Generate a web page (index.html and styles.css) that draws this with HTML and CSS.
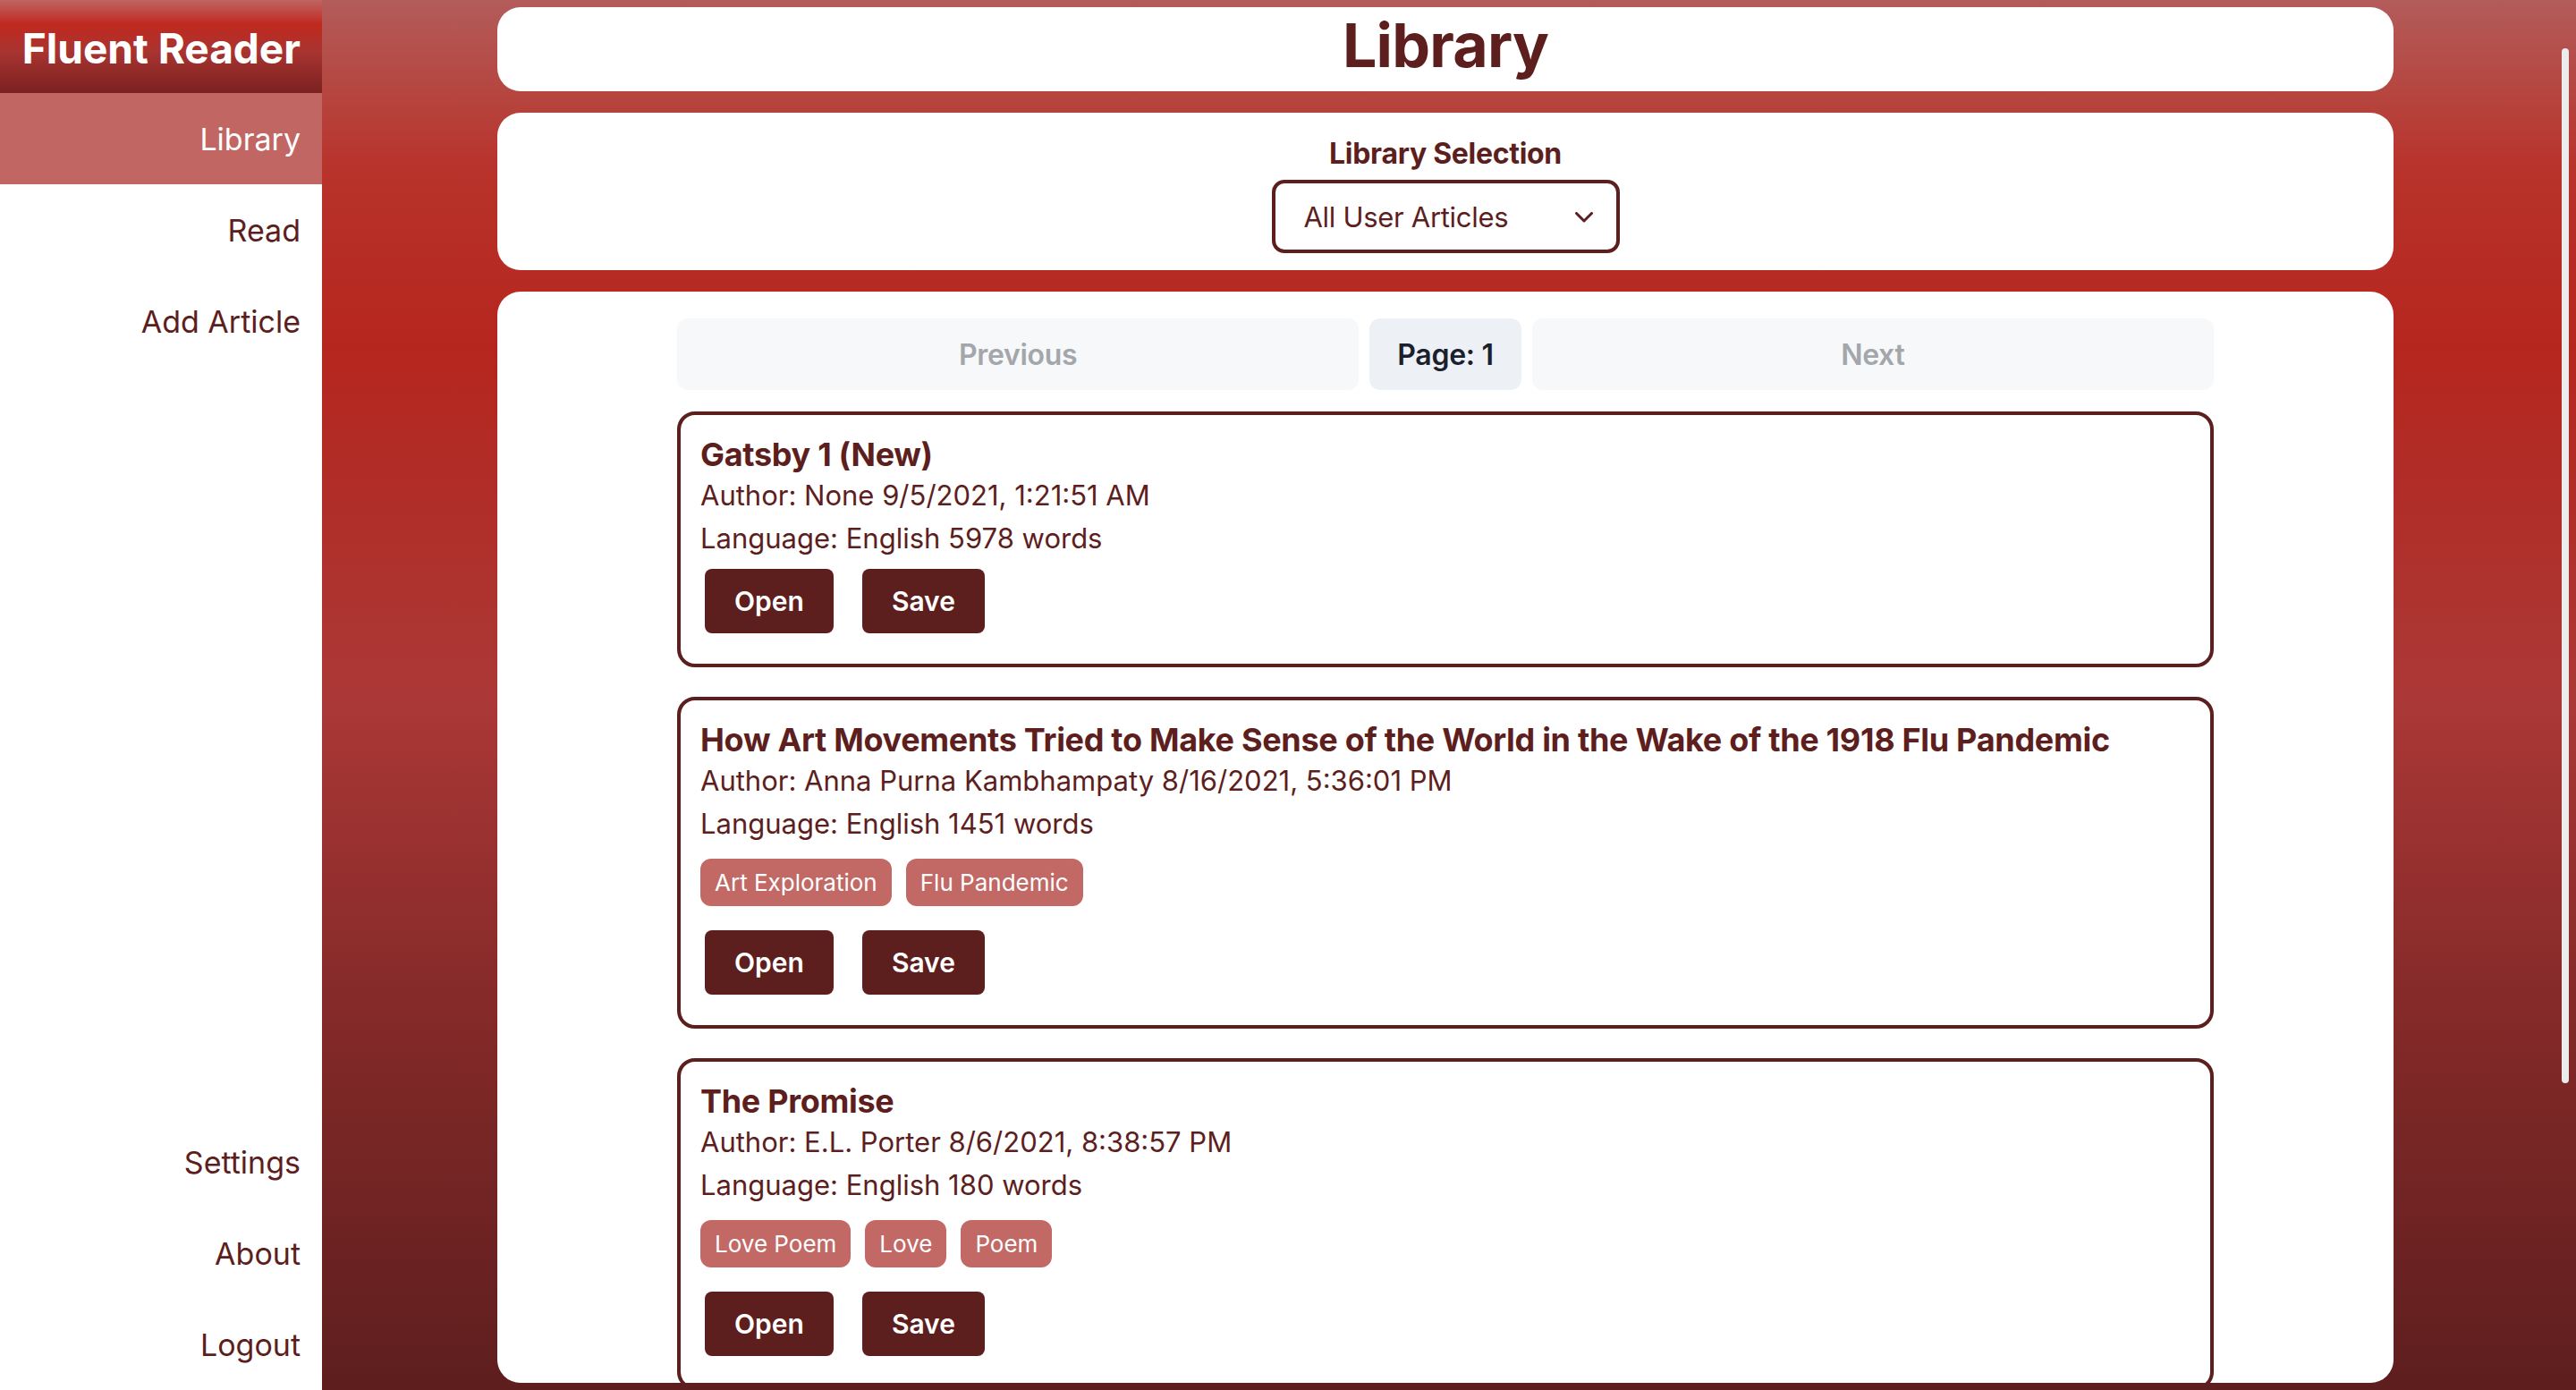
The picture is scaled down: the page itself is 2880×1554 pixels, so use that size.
FILE: index.html
```html
<!DOCTYPE html>
<html lang="en">
<head>
<meta charset="utf-8">
<title>Fluent Reader - Library</title>
<link rel="stylesheet" href="styles.css">
</head>
<body>
<div class="app">
  <aside class="sidebar">
    <div class="brand">Fluent Reader</div>
    <nav class="nav">
      <a class="nav-item active">Library</a>
      <a class="nav-item">Read</a>
      <a class="nav-item">Add Article</a>
    </nav>
    <nav class="nav nav-bottom">
      <a class="nav-item">Settings</a>
      <a class="nav-item">About</a>
      <a class="nav-item">Logout</a>
    </nav>
  </aside>
  <main class="main">
    <section class="panel title-panel">
      <h1 class="page-title">Library</h1>
    </section>
    <section class="panel select-panel">
      <label class="select-label">Library Selection</label>
      <div class="select">
        <span class="select-value">All User Articles</span>
        <svg class="chevron" width="20" height="12" viewBox="0 0 20 12"><polyline points="1.5,1.5 10,10 18.5,1.5" fill="none" stroke="#5d1e1e" stroke-width="3" stroke-linecap="round" stroke-linejoin="round"/></svg>
      </div>
    </section>
    <section class="panel list-panel">
      <div class="pager">
        <button class="pager-btn disabled">Previous</button>
        <button class="pager-btn current">Page: 1</button>
        <button class="pager-btn disabled">Next</button>
      </div>
      <div class="articles">
        <article class="article">
          <h2 class="article-title">Gatsby 1 (New)</h2>
          <p class="meta">Author: None 9/5/2021, 1:21:51 AM</p>
          <p class="meta">Language: English 5978 words</p>
          <div class="actions">
            <button class="btn">Open</button>
            <button class="btn">Save</button>
          </div>
        </article>
        <article class="article">
          <h2 class="article-title">How Art Movements Tried to Make Sense of the World in the Wake of the 1918 Flu Pandemic</h2>
          <p class="meta">Author: Anna Purna Kambhampaty 8/16/2021, 5:36:01 PM</p>
          <p class="meta">Language: English 1451 words</p>
          <div class="tags">
            <span class="tag">Art Exploration</span>
            <span class="tag">Flu Pandemic</span>
          </div>
          <div class="actions">
            <button class="btn">Open</button>
            <button class="btn">Save</button>
          </div>
        </article>
        <article class="article">
          <h2 class="article-title">The Promise</h2>
          <p class="meta">Author: E.L. Porter 8/6/2021, 8:38:57 PM</p>
          <p class="meta">Language: English 180 words</p>
          <div class="tags">
            <span class="tag">Love Poem</span>
            <span class="tag">Love</span>
            <span class="tag">Poem</span>
          </div>
          <div class="actions">
            <button class="btn">Open</button>
            <button class="btn">Save</button>
          </div>
        </article>
      </div>
    </section>
  </main>
  <div class="scroll-thumb"></div>
</div>
</body>
</html>
```

FILE: styles.css
```css
* { box-sizing: border-box; }
html, body { margin: 0; padding: 0; }
body {
  font-family: Inter, "Noto Sans", "Liberation Sans", sans-serif;
  color: #5d1e1e;
  width: 2880px;
  height: 1554px;
  overflow: hidden;
}
.app {
  position: relative;
  display: grid;
  grid-template-columns: 360px 1fr;
  height: 1554px;
}

/* Sidebar */
.sidebar {
  background: #ffffff;
  display: flex;
  flex-direction: column;
  height: 1554px;
}
.brand {
  height: 104px;
  padding: 4px 24px 0 0;
  display: flex;
  align-items: center;
  justify-content: flex-end;
  color: #ffffff;
  font-weight: 700;
  font-size: 46px;
  letter-spacing: 0;
  background: linear-gradient(180deg, #bf6564 0%, #c0291f 26%, #a93430 55%, #7a2121 100%);
}
.nav { display: flex; flex-direction: column; }
.nav-bottom { margin-top: auto; }
.nav-item {
  height: 102px;
  display: flex;
  align-items: center;
  justify-content: flex-end;
  padding-right: 24px;
  font-size: 34px;
  color: #5d1e1e;
}
.nav-item.active {
  background: #c16662;
  color: #ffffff;
}

/* Main */
.main {
  height: 1554px;
  display: flex;
  flex-direction: column;
  gap: 24px;
  padding: 8px 204px 8px 196px;
  background: linear-gradient(180deg, #b35c5a 0%, #b8332b 12%, #b5261e 25%, #ab3836 50%, #852a29 72%, #5e1e1e 100%);
}
.panel {
  background: #ffffff;
  border-radius: 26px;
}
.title-panel {
  height: 94px;
  flex: none;
  display: flex;
  justify-content: center;
}
.page-title {
  margin: 0;
  font-size: 68px;
  font-weight: 700;
  line-height: 84px;
  letter-spacing: -0.8px;
}
.select-panel {
  height: 176px;
  flex: none;
  display: flex;
  flex-direction: column;
  align-items: center;
  padding-top: 26px;
}
.select-label {
  font-size: 32px;
  font-weight: 700;
  line-height: 39px;
  letter-spacing: -0.3px;
}
.select {
  margin-top: 10px;
  width: 389px;
  height: 82px;
  border: 4px solid #5d1e1e;
  border-radius: 14px;
  display: flex;
  align-items: center;
  justify-content: space-between;
  padding: 0 26px 0 32px;
}
.select-value {
  font-size: 31px;
  letter-spacing: -0.3px;
}
.chevron { display: block; margin-top: 2px; }

.list-panel {
  flex: 1;
  min-height: 0;
  overflow: hidden;
  padding: 30px 201px 0 201px;
}
.pager {
  display: flex;
  gap: 12px;
  height: 80px;
}
.pager-btn {
  font-family: inherit;
  border: 0;
  border-radius: 12px;
  font-size: 32px;
  font-weight: 600;
  height: 80px;
  padding: 0 31px;
  letter-spacing: -0.3px;
}
.pager-btn.disabled {
  flex: 1;
  background: #f7f8fa;
  color: #a3a6ab;
}
.pager-btn.current {
  background: #edf1f6;
  color: #1a202c;
}

.articles {
  margin-top: 24px;
  display: flex;
  flex-direction: column;
  gap: 33px;
}
.article {
  border: 4px solid #5d1e1e;
  border-radius: 20px;
  padding: 22px;
}
.article-title {
  margin: 0;
  font-size: 36px;
  font-weight: 700;
  line-height: 44px;
  letter-spacing: -0.3px;
}
.meta {
  margin: 0;
  font-size: 31px;
  line-height: 48px;
  letter-spacing: 0;
}
.tags {
  margin-top: 15px;
  margin-bottom: 27px;
  display: flex;
  gap: 16px;
}
.tag {
  height: 53px;
  display: flex;
  align-items: center;
  padding: 0 16px;
  border-radius: 12px;
  background: #c26966;
  color: #ffffff;
  font-size: 26px;
  letter-spacing: 0;
}
.actions {
  margin-top: 10px;
  margin-bottom: 12px;
  display: flex;
  gap: 32px;
  padding-left: 5px;
}
.btn {
  font-family: inherit;
  height: 72px;
  border: 0;
  border-radius: 8px;
  background: #5d1e1e;
  color: #ffffff;
  font-size: 30px;
  font-weight: 600;
  padding: 0 33px;
  letter-spacing: 0;
}

.scroll-thumb {
  position: absolute;
  right: 8px;
  top: 54px;
  width: 8px;
  height: 1157px;
  border-radius: 4px;
  background: #ececec;
}
```
